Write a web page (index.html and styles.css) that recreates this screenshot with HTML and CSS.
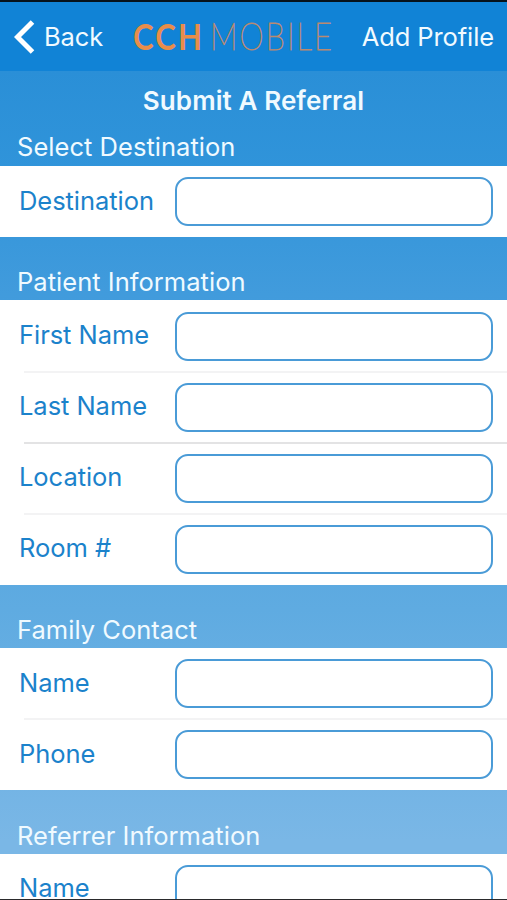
FILE: index.html
```
<!DOCTYPE html>
<html lang="en">
<head>
  <meta charset="UTF-8" />
  <meta name="viewport" content="width=device-width, initial-scale=1.0"/>
  <title>CCH Mobile — Submit A Referral</title>
  <link rel="stylesheet" href="styles.css">
</head>
<body>

  <header>
    <button type="button" class="nav-btn back">
      <svg width="21" height="34" viewBox="0 0 21 34"><path d="M18.5 2 L3.5 17 L18.5 32" fill="none" stroke="#fff" stroke-width="5"/></svg>
      <span>Back</span>
    </button>
    <svg class="logo" width="206" height="56" viewBox="0 0 206 56">
      <text class="logo-bold" x="0" y="41" textLength="71" lengthAdjust="spacingAndGlyphs">CCH</text>
      <text class="logo-thin" x="77" y="41" textLength="124" lengthAdjust="spacingAndGlyphs">MOBILE</text>
    </svg>
    <button type="button" class="nav-btn add">Add Profile</button>
  </header>

  <form id="referral-form">
    <h1>Submit A Referral</h1>

    <h2 class="first">Select Destination</h2>
    <div class="group">
      <label class="row"><span>Destination</span><input type="text"></label>
    </div>

    <h2>Patient Information</h2>
    <div class="group">
      <label class="row"><span>First Name</span><input type="text"></label>
      <label class="row"><span>Last Name</span><input type="text"></label>
      <label class="row strong"><span>Location</span><input type="text"></label>
      <label class="row"><span>Room #</span><input type="text"></label>
    </div>

    <h2>Family Contact</h2>
    <div class="group">
      <label class="row"><span>Name</span><input type="text"></label>
      <label class="row"><span>Phone</span><input type="text"></label>
    </div>

    <h2>Referrer Information</h2>
    <div class="group">
      <label class="row"><span>Name</span><input type="text"></label>
    </div>
  </form>

</body>
</html>
```
FILE: styles.css
```
* {
  box-sizing: border-box;
}

body {
  margin: 0;
  height: 900px;
  display: flex;
  flex-direction: column;
  overflow: hidden;
  border-top: 2px solid #06121c;
  border-bottom: 1px solid #2a2a2c;
  background: #1183d6;
  font-family: Inter, "Liberation Sans", sans-serif;
  font-size: 25.5px;
  letter-spacing: -0.1px;
  color: #f0faff;
}

header {
  flex: none;
  display: flex;
  align-items: center;
  height: 69px;
  padding: 0 13px 0 14px;
  background: #1183d6;
}

.nav-btn {
  display: flex;
  align-items: center;
  padding: 0;
  border: none;
  background: none;
  font: inherit;
  letter-spacing: inherit;
  color: inherit;
  white-space: nowrap;
}

.back {
  gap: 9px;
  width: 119px;
}

.add {
  margin-left: auto;
}

.logo {
  flex: none;
}

.logo text {
  font-family: Lato, sans-serif;
  font-size: 37px;
}

.logo .logo-bold {
  font-weight: 700;
  letter-spacing: 2.5px;
  fill: #e98d4a;
}

.logo .logo-thin {
  font-weight: 100;
  letter-spacing: 2.5px;
  fill: #b98a72;
  stroke: #b98a72;
  stroke-width: 1px;
}

#referral-form {
  flex: 1;
  min-height: 0;
  overflow: hidden;
  background: linear-gradient(#2a8fd7, #3094da 12%, #419bdc 27%, #5fabe1 65%, #7ab7e6 93%);
}

h1 {
  margin: 0;
  height: 58px;
  font-size: 26px;
  line-height: 59px;
  font-weight: 600;
  letter-spacing: 0.1px;
  text-align: center;
}

h2 {
  display: flex;
  align-items: flex-end;
  margin: 0;
  height: 63.4px;
  padding: 0 17px 3px;
  font-size: 25.5px;
  line-height: 31px;
  font-weight: 400;
  letter-spacing: 0.03px;
}

h2.first {
  height: 37px;
  padding-bottom: 4px;
}

.group {
  background: #fff;
}

.row {
  position: relative;
  display: flex;
  align-items: center;
  height: 71.1px;
  padding: 0 14px 0 19px;
  letter-spacing: -0.05px;
  color: #1b82cb;
}

.row span {
  width: 156px;
  padding-bottom: 3px;
  white-space: nowrap;
}

.row + .row::before {
  content: "";
  position: absolute;
  top: -1px;
  left: 24px;
  right: 0;
  height: 2px;
  background: #f3f3f4;
}

.row.strong::before {
  background: #e3e3e4 !important;
}

.row input {
  flex: 1;
  min-width: 0;
  height: 49px;
  padding: 0 12px;
  border: 2px solid #4a9bd7;
  border-radius: 13px;
  background: #fff;
  font: inherit;
  color: inherit;
  outline: none;
}
```
